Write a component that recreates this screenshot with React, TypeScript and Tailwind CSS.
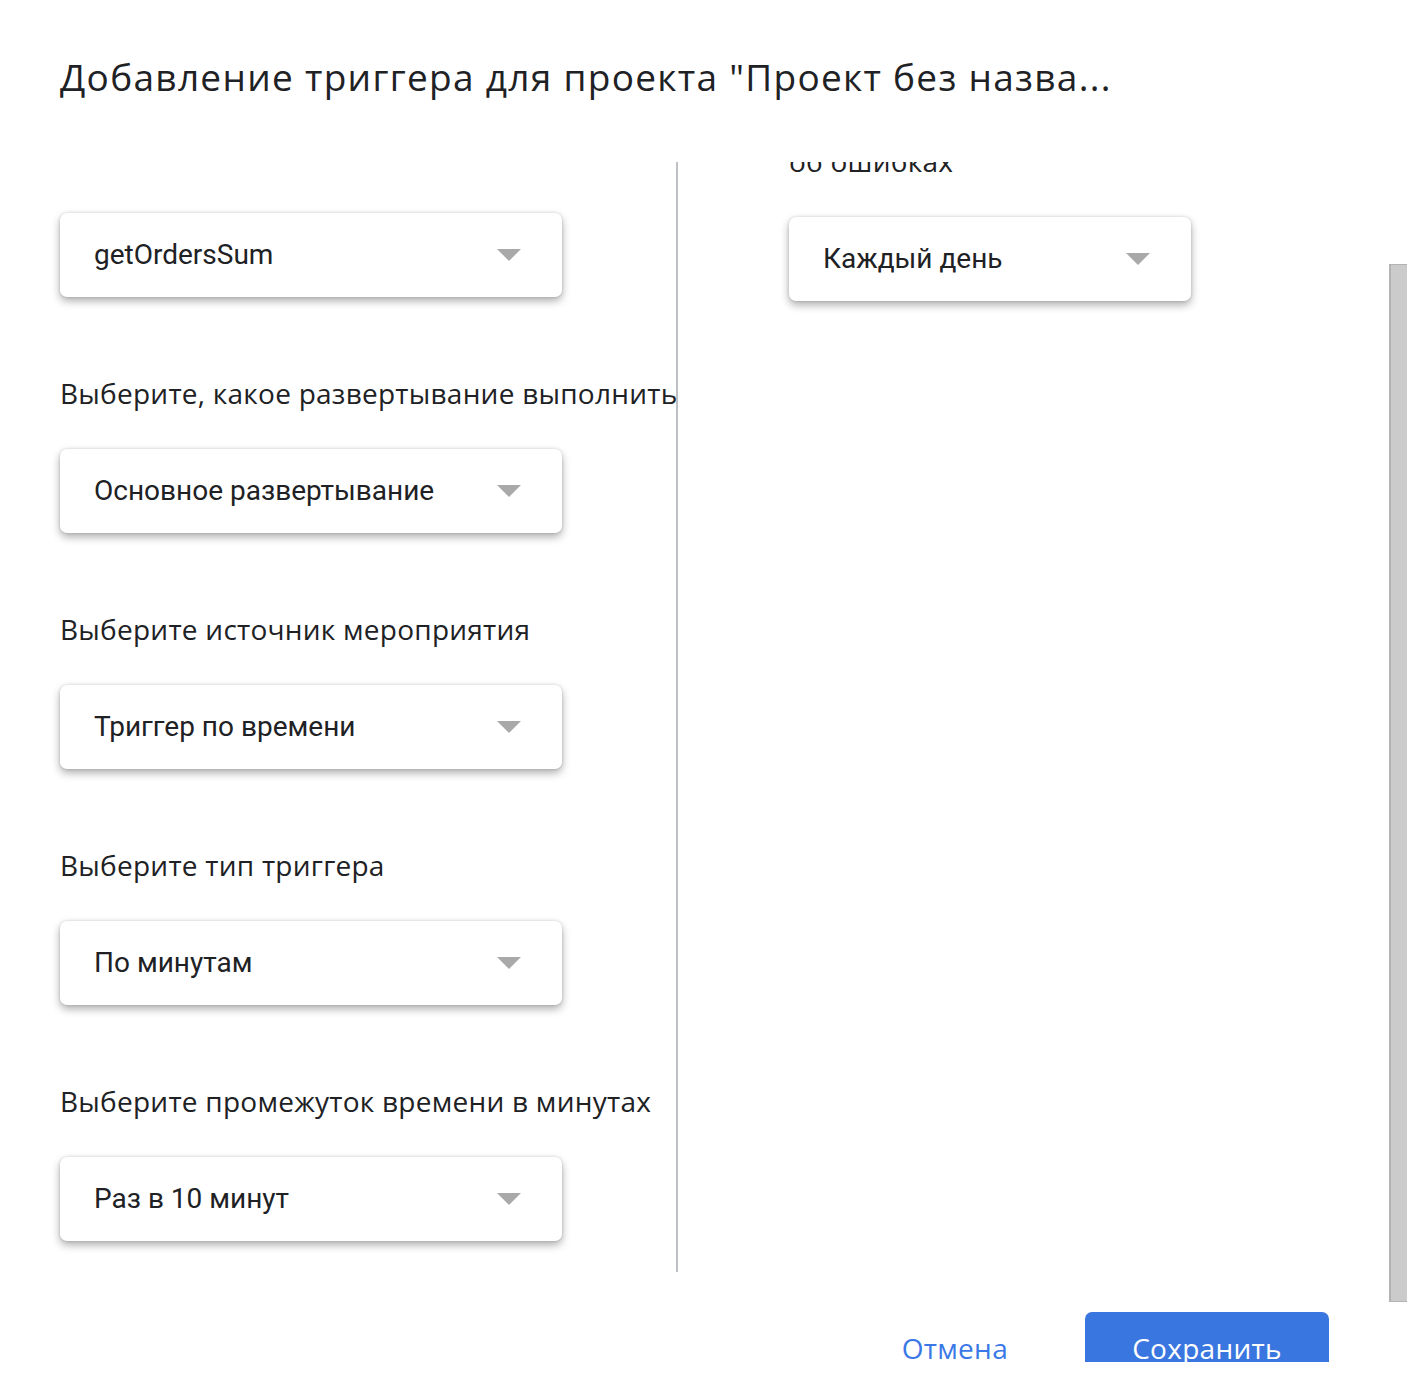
import React from "react";

const labelFont = "font-['Open_Sans',sans-serif]";

const Dropdown = ({ value, width = "w-[502px]" }: { value: string; width?: string }) => {
  return (
    <div
      className={`${width} h-[84px] flex items-center justify-between pl-[34px] pr-[41px] bg-white rounded-[7px] shadow-[0_0_3px_rgba(0,0,0,0.14),0_4px_8px_rgba(0,0,0,0.32)] cursor-pointer`}
    >
      <span className="font-['Roboto',sans-serif] text-[28px] text-[#202124]">{value}</span>
      <span className="w-0 h-0 border-l-[12px] border-r-[12px] border-t-[12px] border-l-transparent border-r-transparent border-t-[#a9a9a9]" />
    </div>
  );
};

const Field = ({ label, value }: { label: string; value: string }) => {
  return (
    <div className="flex flex-col">
      <div className={`${labelFont} text-[28px] tracking-[0.25px] leading-[36px] text-[#202124] whitespace-nowrap mt-[78px] mb-[38px]`}>
        {label}
      </div>
      <Dropdown value={value} />
    </div>
  );
};

export default function App() {
  return (
    <div className="relative w-[1412px] h-[1380px] bg-white overflow-hidden">
      <h1 className={`${labelFont} pl-[60px] pt-[52px] text-[37px] tracking-[1.3px] leading-[50px] font-medium text-[#202124] whitespace-nowrap`}>
        Добавление триггера для проекта "Проект без назва...
      </h1>

      <div className="flex h-[1110px] mt-[60px] pl-[60px] overflow-hidden">
        <div className="w-[618px] border-r-2 border-[#bdc1c6] pt-[51px]">
          <Dropdown value="getOrdersSum" />
          <Field label="Выберите, какое развертывание выполнить" value="Основное развертывание" />
          <Field label="Выберите источник мероприятия" value="Триггер по времени" />
          <Field label="Выберите тип триггера" value="По минутам" />
          <Field label="Выберите промежуток времени в минутах" value="Раз в 10 минут" />
        </div>

        <div className="pl-[111px]">
          <div className={`${labelFont} -mt-[55px] text-[28px] tracking-[0.25px] leading-[36px] text-[#202124] whitespace-nowrap mb-[38px]`}>
            Настройки уведомлений
            <br />
            об ошибках
          </div>
          <Dropdown value="Каждый день" width="w-[402px]" />
        </div>
      </div>

      <div className="flex items-start justify-end gap-[77px] pr-[83px] h-[90px] overflow-hidden">
        <button className={`${labelFont} mt-[58px] text-[28px] tracking-[0.3px] leading-[36px] font-medium text-[#3b78e7]`}>
          Отмена
        </button>
        <button
          className={`${labelFont} mt-[40px] w-[244px] h-[64px] pt-[18px] rounded-[7px] bg-[#3a76e0] text-white text-[28px] tracking-[0.3px] leading-[36px] font-medium flex justify-center items-start`}
        >
          Сохранить
        </button>
      </div>

      {/* scrollbar thumb */}
      <div className="absolute left-[1389px] top-[264px] w-[18px] h-[1038px] bg-[#cbcbcb] border-l-2 border-t border-b border-[#b3b3b3]" />
    </div>
  );
}
